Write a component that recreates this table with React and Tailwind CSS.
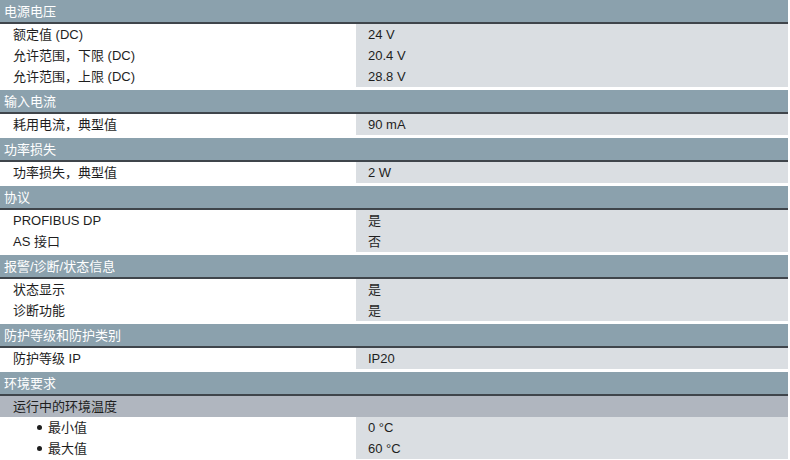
import React from "react";

const sections = [
  {
    title: "电源电压",
    rows: [
      ["额定值 (DC)", "24 V"],
      ["允许范围，下限 (DC)", "20.4 V"],
      ["允许范围，上限 (DC)", "28.8 V"],
    ],
  },
  { title: "输入电流", rows: [["耗用电流，典型值", "90 mA"]] },
  { title: "功率损失", rows: [["功率损失，典型值", "2 W"]] },
  {
    title: "协议",
    rows: [
      ["PROFIBUS DP", "是"],
      ["AS 接口", "否"],
    ],
  },
  {
    title: "报警/诊断/状态信息",
    rows: [
      ["状态显示", "是"],
      ["诊断功能", "是"],
    ],
  },
  { title: "防护等级和防护类别", rows: [["防护等级 IP", "IP20"]] },
  {
    title: "环境要求",
    sub: "运行中的环境温度",
    rows: [
      ["最小值", "0 °C", true],
      ["最大值", "60 °C", true],
    ],
  },
];

function Row({ label, value, bullet }) {
  return (
    <div className="flex h-[21px] items-center">
      <div className="w-[356px] h-full flex items-center bg-white pl-[13px]">
        {bullet ? (
          <span className="flex items-center pl-[24px]">
            <span className="inline-block w-[5px] h-[5px] rounded-full bg-[#1e1e1e] mr-[6px]"></span>
            {label}
          </span>
        ) : (
          label
        )}
      </div>
      <div className="flex-1 h-full flex items-center bg-[#dadee2] pl-[12px]">{value}</div>
    </div>
  );
}

export default function App() {
  return (
    <div
      className="w-[788px] bg-white text-[13px] text-[#1e1e1e] leading-none"
      style={{ fontFamily: '"Liberation Sans", "Noto Sans CJK SC", Arial, sans-serif' }}
    >
      {sections.map((s, i) => (
        <div key={i} className={i === 0 ? "" : "mt-[3px]"}>
          <div className="h-[24px] bg-[#8ba1ad] border-b-2 border-[#3f454b] flex items-center pl-[4px] text-white">
            {s.title}
          </div>
          {s.sub && (
            <div className="h-[21px] bg-[#b0b6bf] flex items-center pl-[13px]">{s.sub}</div>
          )}
          {s.rows.map((r, j) => (
            <Row key={j} label={r[0]} value={r[1]} bullet={r[2]} />
          ))}
        </div>
      ))}
    </div>
  );
}
